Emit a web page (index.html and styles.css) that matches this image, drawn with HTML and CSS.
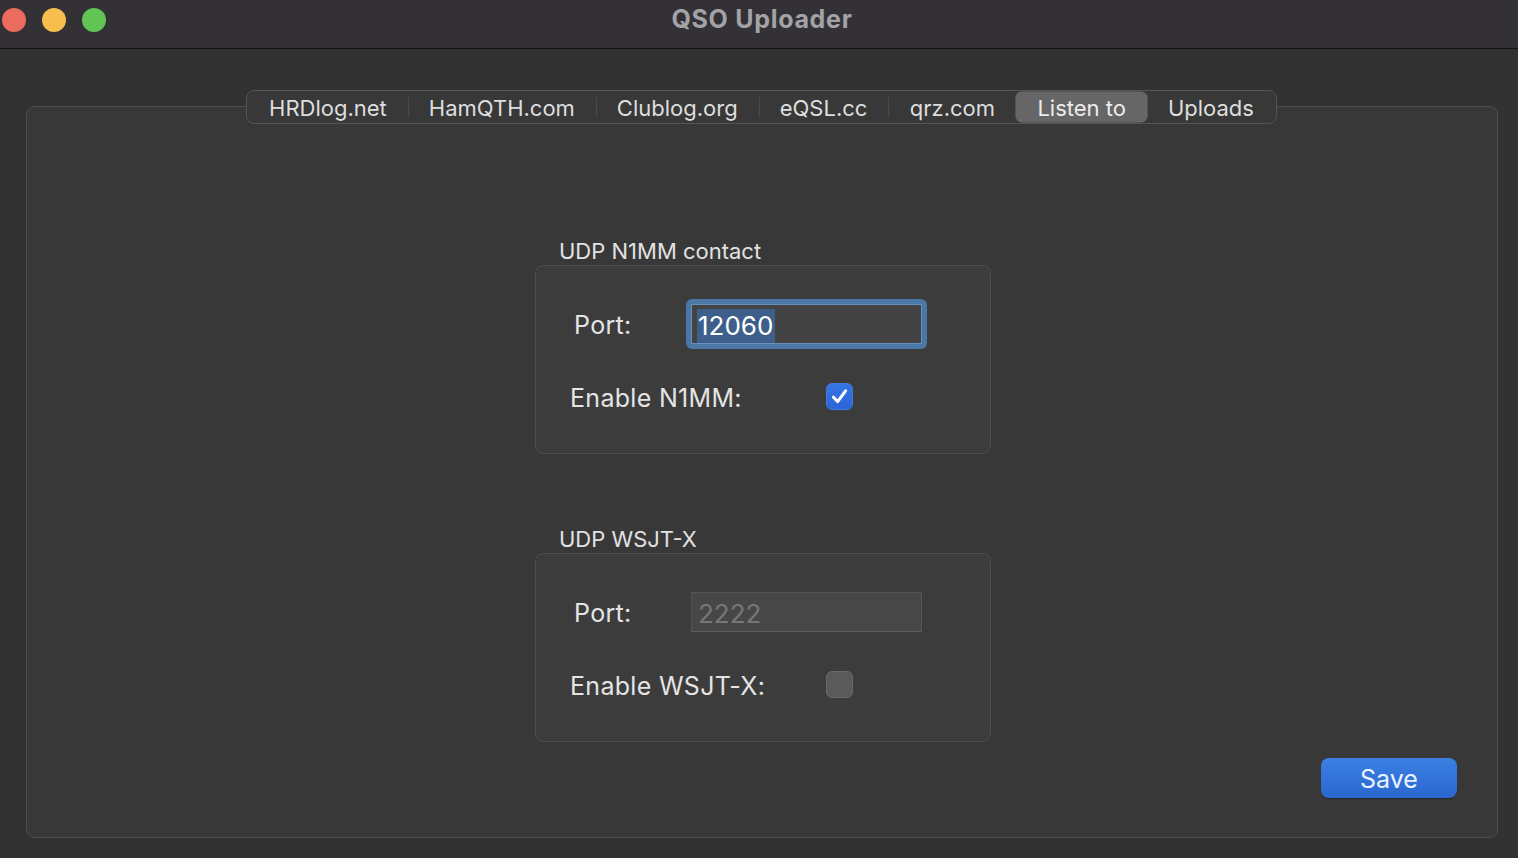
FILE: index.html
```html
<!DOCTYPE html>
<html lang="en">
<head>
<meta charset="utf-8">
<title>QSO Uploader</title>
<link rel="stylesheet" href="styles.css">
</head>
<body>
<div class="window">
  <header class="titlebar">
    <div class="lights">
      <span class="light red"></span>
      <span class="light yellow"></span>
      <span class="light green"></span>
    </div>
    <div class="title">QSO Uploader</div>
  </header>
  <main class="content">
    <nav class="tabs">
      <div class="tab">HRDlog.net</div>
      <span class="sep"></span>
      <div class="tab">HamQTH.com</div>
      <span class="sep"></span>
      <div class="tab">Clublog.org</div>
      <span class="sep"></span>
      <div class="tab">eQSL.cc</div>
      <span class="sep"></span>
      <div class="tab">qrz.com</div>
      <span class="sep hidden"></span>
      <div class="tab active">Listen to</div>
      <span class="sep hidden"></span>
      <div class="tab">Uploads</div>
    </nav>
    <section class="panel">
      <div class="groups">
        <div class="group">
          <div class="group-title">UDP N1MM contact</div>
          <div class="group-box">
            <div class="row row-port">
              <label class="port-label">Port:</label>
              <div class="field-wrap focused">
                <div class="field"><span class="sel">12060</span></div>
              </div>
            </div>
            <div class="row row-check">
              <label class="check-label">Enable N1MM:</label>
              <span class="checkbox checked">
                <svg viewBox="0 0 27 27" width="27" height="27"><path d="M7.5 14.2 L11.6 18.6 L19.6 7.8" fill="none" stroke="#ffffff" stroke-width="3" stroke-linecap="round" stroke-linejoin="round"/></svg>
              </span>
            </div>
          </div>
        </div>
        <div class="group">
          <div class="group-title">UDP WSJT-X</div>
          <div class="group-box">
            <div class="row row-port">
              <label class="port-label">Port:</label>
              <div class="field-wrap">
                <div class="field disabled">2222</div>
              </div>
            </div>
            <div class="row row-check">
              <label class="check-label">Enable WSJT-X:</label>
              <span class="checkbox"></span>
            </div>
          </div>
        </div>
      </div>
      <div class="actions">
        <button class="save">Save</button>
      </div>
    </section>
  </main>
</div>
</body>
</html>
```

FILE: styles.css
```css
* { box-sizing: border-box; }
html, body {
  margin: 0;
  padding: 0;
  width: 1518px;
  height: 858px;
  overflow: hidden;
  background: #323232;
  font-family: Inter, "Noto Sans", "Liberation Sans", sans-serif;
}
.window {
  width: 1518px;
  height: 858px;
  display: flex;
  flex-direction: column;
}
.titlebar {
  height: 49px;
  flex: none;
  background: #333135;
  border-bottom: 1px solid #121212;
  display: flex;
  align-items: center;
  position: relative;
}
.lights {
  display: flex;
  gap: 16px;
  padding-left: 2px;
  margin-top: -8px;
}
.light {
  width: 24px;
  height: 24px;
  border-radius: 50%;
  display: block;
}
.red { background: #ec6b5f; }
.yellow { background: #f5be4f; }
.green { background: #61c454; }
.title {
  position: absolute;
  left: 0;
  right: 0;
  top: 4px;
  text-align: center;
  color: #a3a2a7;
  font-weight: 700;
  font-size: 25px;
  letter-spacing: 0.7px;
  line-height: 30px;
  padding-left: 6px;
  pointer-events: none;
}
.content {
  flex: 1;
  display: flex;
  flex-direction: column;
  padding: 41px 20px 20px 26px;
}
.tabs {
  align-self: center;
  position: relative;
  z-index: 1;
  height: 34px;
  display: flex;
  align-items: center;
  padding: 0 1px;
  border: 1px solid #555555;
  border-radius: 8px;
  background: #383838;
  margin-left: -1px;
}
.tab {
  height: 30px;
  min-width: 128px;
  padding: 2px 21px 0 21px;
  display: flex;
  align-items: center;
  justify-content: center;
  color: #dedede;
  font-size: 22px;
  border-radius: 6px;
  white-space: nowrap;
}
.tab.active {
  background: #666666;
  color: #ececec;
  box-shadow: 0 0 0 0.5px #707070;
}
.sep {
  width: 1px;
  height: 20px;
  margin-right: -1px;
  background: #4a4a4a;
  flex: none;
}
.sep.hidden { background: transparent; }
.panel {
  flex: 1;
  margin-top: -18px;
  border: 1px solid #4e4e4e;
  border-radius: 9px;
  background: #383838;
  padding-top: 131px;
  display: flex;
  flex-direction: column;
}
.groups {
  margin-left: 508px;
  width: 456px;
  display: flex;
  flex-direction: column;
  gap: 72px;
}
.group-title {
  height: 27px;
  line-height: 26px;
  padding-left: 24px;
  color: #e2e2e2;
  font-size: 22px;
}
.group-box {
  height: 189px;
  border: 1px solid #4d4d4d;
  border-radius: 8px;
  background: #3c3c3c;
  padding: 33px 0 40px 0;
  display: flex;
  flex-direction: column;
  gap: 33px;
}
.row {
  display: flex;
  align-items: center;
}
.row-port {
  height: 50px;
  padding-left: 38px;
}
.row-check {
  height: 30px;
  padding-left: 34px;
}
.port-label {
  width: 112px;
  color: #e4e4e4;
  font-size: 25px;
  letter-spacing: 0.3px;
  padding-top: 2px;
}
.check-label {
  width: 256px;
  color: #e4e4e4;
  font-size: 25px;
  letter-spacing: 0.3px;
  white-space: nowrap;
  padding-top: 2px;
}
.field-wrap {
  width: 241px;
  height: 50px;
  padding: 5px;
  border-radius: 6px;
}
.field-wrap.focused {
  background: #4b77a7;
}
.field {
  height: 40px;
  border: 1px solid #575757;
  background: #464646;
  font-size: 26px;
  color: #ffffff;
  display: flex;
  align-items: center;
  padding-left: 5px;
  padding-top: 3px;
}
.focused .field {
  border-color: #6b8fbc;
  background: #434343;
}
.sel {
  background: #3e5f8b;
  padding: 0 2px 0 1px;
  line-height: 34px;
}
.field.disabled {
  color: #777777;
  padding-left: 6px;
  border-color: #545454;
  background: #474747;
  border-bottom-color: #5f5f5f;
}
.checkbox {
  width: 27px;
  height: 27px;
  border-radius: 6px;
  background: #5a5a5a;
  border: 1px solid #686868;
  display: block;
  flex: none;
  position: relative;
  margin-top: -2px;
}
.checkbox.checked {
  background: linear-gradient(#3576e6, #2b64d4);
  border-color: #3f7ae0;
}
.checkbox svg {
  position: absolute;
  left: -1px;
  top: -1px;
}
.actions {
  display: flex;
  justify-content: flex-end;
  padding-right: 40px;
  margin-top: 16px;
}
.save {
  width: 136px;
  height: 40px;
  border: none;
  border-radius: 8px;
  background: linear-gradient(#3b80e4, #2a67cf);
  color: #eaf2ff;
  font-family: inherit;
  font-size: 25px;
  padding: 2px 0 0 0;
  box-shadow: 0 1px 1px rgba(0,0,0,0.3);
}
```
